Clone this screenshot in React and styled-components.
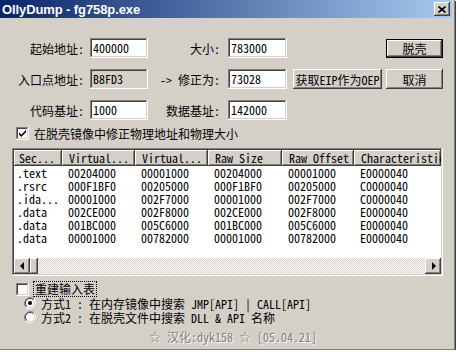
import React from "react"
import styled, { createGlobalStyle, css } from "styled-components"

const GlobalStyle = createGlobalStyle`
  html, body {
    margin: 0;
    padding: 0;
    background: #ffffff;
  }
  body {
    font-family: "Noto Sans Mono CJK SC", "Noto Sans CJK SC", monospace;
    font-size: 12px;
    color: #000;
  }
`

const face = "#D4D0C8"

const raised = css`
  box-shadow: inset -1px -1px #404040, inset 1px 1px #ffffff,
    inset -2px -2px #808080, inset 2px 2px ${face};
`

const sunken = css`
  box-shadow: inset -1px -1px #ffffff, inset 1px 1px #808080,
    inset -2px -2px ${face}, inset 2px 2px #404040;
`

const Frame = styled.div`
  width: 452px;
  height: 348px;
  padding: 0 2px 1px 0;
  background: ${face};
  border-right: 1px solid #808080;
  border-bottom: 1px solid #808080;
  box-shadow: 1px 1px 0 #404040;
  display: flex;
  flex-direction: column;
`

const TitleBar = styled.div`
  height: 18px;
  display: flex;
  align-items: center;
  justify-content: space-between;
  padding: 0 2px 0 2px;
  background: linear-gradient(to right, #0a246a, #a6caf0);
`

const TitleText = styled.span`
  font-family: "Liberation Sans", Arial, sans-serif;
  font-weight: bold;
  font-size: 13px;
  color: #ffffff;
  letter-spacing: -0.1px;
`

const CloseButton = styled.div`
  width: 16px;
  height: 14px;
  background: ${face};
  ${raised};
  display: flex;
  align-items: center;
  justify-content: center;
`

const Body = styled.div`
  flex: 1;
  display: flex;
  flex-direction: column;
  padding: 20px 10px 0 12px;
`

const FormGrid = styled.div`
  display: grid;
  grid-template-columns: 78px 58px 80px 59px 6px 89px 4px 57px;
  grid-auto-rows: 20px;
  row-gap: 11px;
  align-items: center;
`

const Label = styled.span`
  text-align: right;
  padding-right: ${(p) => p.$pad || 6}px;
  white-space: nowrap;
  grid-column: ${(p) => p.$col};
`

const TextBox = styled.div`
  height: 20px;
  box-sizing: border-box;
  padding: 3px 0 0 3px;
  line-height: 14px;
  background: ${(p) => (p.$disabled ? face : "#ffffff")};
  ${sunken};
  grid-column: ${(p) => p.$col};
`

const Button = styled.div`
  height: ${(p) => (p.$default ? 19 : 20)}px;
  box-sizing: border-box;
  display: flex;
  align-items: center;
  justify-content: center;
  background: ${face};
  grid-column: ${(p) => p.$col};
  ${(p) =>
    p.$default
      ? css`
          border: 1px solid #000;
          box-shadow: inset -1px -1px #404040, inset 1px 1px #ffffff,
            inset -2px -2px #808080;
        `
      : raised};
`

const CheckRow = styled.div`
  display: flex;
  align-items: center;
  height: ${(p) => p.$h || 16}px;
  margin-top: ${(p) => p.$mt || 0}px;
  padding-left: ${(p) => p.$indent || 4}px;
  gap: 5px;
  white-space: nowrap;
`

const Box = styled.div`
  width: 13px;
  height: 13px;
  box-sizing: border-box;
  background: #ffffff;
  ${sunken};
  display: flex;
  align-items: center;
  justify-content: center;
  flex: none;
`

const Focus = styled.span`
  outline: 1px dotted #000;
  outline-offset: 0;
  padding: 0 1px;
  line-height: 14px;
`

const Table = styled.div`
  margin-top: 7px;
  width: 431px;
  height: 128px;
  box-sizing: border-box;
  padding: 2px;
  background: #ffffff;
  ${sunken};
  display: flex;
  flex-direction: column;
  overflow: hidden;
`

const Cols = "48px 73px 73px 74px 72px 87px"

const HeaderRow = styled.div`
  display: grid;
  grid-template-columns: ${Cols};
  height: 16px;
  flex: none;
`

const HeaderCell = styled.div`
  background: ${face};
  ${raised};
  padding-left: ${(p) => (p.$first ? 5 : 7)}px;
  line-height: 16px;
  white-space: nowrap;
  overflow: hidden;
`

const Rows = styled.div`
  flex: 1;
`

const DataRow = styled.div`
  display: grid;
  grid-template-columns: ${Cols};
  height: 13px;
  line-height: 13px;
`

const Cell = styled.div`
  padding-left: ${(p) => (p.$first ? 3 : 6)}px;
  white-space: nowrap;
  overflow: hidden;
`

const ScrollBar = styled.div`
  height: 16px;
  flex: none;
  display: flex;
`

const ScrollButton = styled.div`
  width: 16px;
  height: 16px;
  box-sizing: border-box;
  background: ${face};
  ${raised};
  display: flex;
  align-items: center;
  justify-content: center;
  flex: none;
`

const Arrow = styled.div`
  width: 0;
  height: 0;
  border-top: 4px solid transparent;
  border-bottom: 4px solid transparent;
  ${(p) =>
    p.$left
      ? css`
          border-right: 4px solid #000;
          margin-right: 1px;
        `
      : css`
          border-left: 4px solid #000;
          margin-left: 1px;
        `}
`

const Thumb = styled.div`
  width: 8px;
  height: 16px;
  box-sizing: border-box;
  background: ${face};
  ${raised};
  flex: none;
`

const Track = styled.div`
  flex: 1;
  background: repeating-conic-gradient(#ffffff 0 25%, ${face} 0 50%) 0 0 / 2px 2px;
`

const RadioDot = styled.svg`
  flex: none;
`

const Footer = styled.div`
  margin-top: 6px;
  height: 14px;
  line-height: 14px;
  text-align: center;
  color: #808080;
  text-shadow: 1px 1px 0 #ffffff;
  padding-left: 12px;
`

const sections = [
  [".text", "00204000", "00001000", "00204000", "00001000", "E0000040"],
  [".rsrc", "000F1BF0", "00205000", "000F1BF0", "00205000", "C0000040"],
  [".ida...", "00001000", "002F7000", "00001000", "002F7000", "C0000040"],
  [".data", "002CE000", "002F8000", "002CE000", "002F8000", "E0000040"],
  [".data", "001BC000", "005C6000", "001BC000", "005C6000", "E0000040"],
  [".data", "00001000", "00782000", "00001000", "00782000", "E0000040"],
]

const headers = ["Sec...", "Virtual...", "Virtual...", "Raw Size", "Raw Offset", "Characteristics"]

function Radio({ checked }) {
  return (
    <RadioDot width="12" height="12" viewBox="0 0 12 12">
      <path d="M10.2 1.8A6 6 0 0 0 1.8 10.2" fill="none" stroke="#808080" strokeWidth="1" />
      <path d="M1.8 10.2A6 6 0 0 0 10.2 1.8" fill="none" stroke="#ffffff" strokeWidth="1" />
      <circle cx="6" cy="6" r="4.5" fill="#ffffff" />
      <path d="M9.2 2.8A4.5 4.5 0 0 0 2.8 9.2" fill="none" stroke="#404040" strokeWidth="1" />
      <path d="M2.8 9.2A4.5 4.5 0 0 0 9.2 2.8" fill="none" stroke={face} strokeWidth="1" />
      {checked && <circle cx="6" cy="6" r="2" fill="#000" />}
    </RadioDot>
  )
}

function Check() {
  return (
    <svg width="9" height="9" viewBox="0 0 9 9">
      <path d="M1 3.5 L3.2 5.8 L8 1 L8 3.2 L3.2 8 L1 5.8 Z" fill="#000" />
    </svg>
  )
}

export default function App() {
  return (
    <>
      <GlobalStyle />
      <Frame>
        <TitleBar>
          <TitleText>OllyDump - fg758p.exe</TitleText>
          <CloseButton>
            <svg width="8" height="7" viewBox="0 0 8 7">
              <path d="M0.5 0.5 L7.5 6.5 M7.5 0.5 L0.5 6.5" stroke="#000" strokeWidth="1.6" />
            </svg>
          </CloseButton>
        </TitleBar>
        <Body>
          <FormGrid>
            <Label $col="1">起始地址:</Label>
            <TextBox $col="2">400000</TextBox>
            <Label $col="3" $pad="8">大小:</Label>
            <TextBox $col="4">783000</TextBox>
            <Button $col="8" $default>脱壳</Button>

            <Label $col="1">入口点地址:</Label>
            <TextBox $col="2" $disabled>B8FD3</TextBox>
            <Label $col="3" $pad="8">-&gt; 修正为:</Label>
            <TextBox $col="4">73028</TextBox>
            <Button $col="6">获取EIP作为OEP</Button>
            <Button $col="8">取消</Button>

            <Label $col="1">代码基址:</Label>
            <TextBox $col="2">1000</TextBox>
            <Label $col="3" $pad="8">数据基址:</Label>
            <TextBox $col="4">142000</TextBox>
          </FormGrid>

          <CheckRow $mt="5">
            <Box>
              <Check />
            </Box>
            <span>在脱壳镜像中修正物理地址和物理大小</span>
          </CheckRow>

          <Table>
            <HeaderRow>
              {headers.map((h, i) => (
                <HeaderCell key={i} $first={i === 0}>
                  {h}
                </HeaderCell>
              ))}
            </HeaderRow>
            <Rows>
              {sections.map((row, r) => (
                <DataRow key={r}>
                  {row.map((v, i) => (
                    <Cell key={i} $first={i === 0}>
                      {v}
                    </Cell>
                  ))}
                </DataRow>
              ))}
            </Rows>
            <ScrollBar>
              <ScrollButton>
                <Arrow $left />
              </ScrollButton>
              <Thumb />
              <Track />
              <ScrollButton>
                <Arrow />
              </ScrollButton>
            </ScrollBar>
          </Table>

          <CheckRow $mt="6" $h="14">
            <Box />
            <Focus>重建输入表</Focus>
          </CheckRow>
          <CheckRow $h="14" $indent="12">
            <Radio checked />
            <span>方式1 : 在内存镜像中搜索 JMP[API] | CALL[API]</span>
          </CheckRow>
          <CheckRow $h="14" $indent="12">
            <Radio />
            <span>方式2 : 在脱壳文件中搜索 DLL &amp; API 名称</span>
          </CheckRow>

          <Footer>☆ 汉化:dyk158 ☆ [05.04.21]</Footer>
        </Body>
      </Frame>
    </>
  )
}
